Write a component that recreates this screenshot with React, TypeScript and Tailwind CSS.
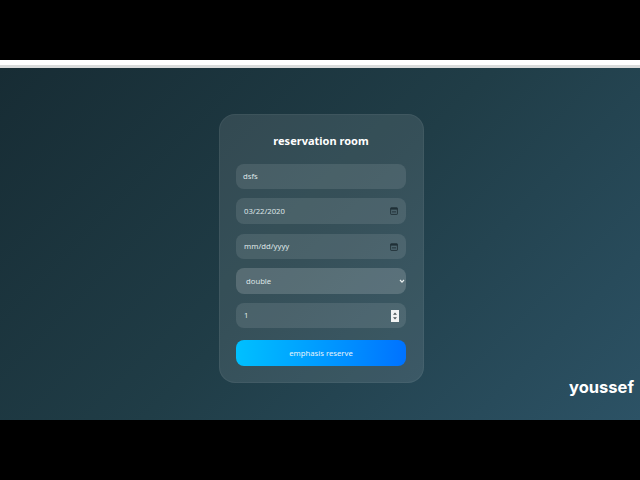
import React from "react";

const CalendarIcon: React.FC = () => (
  <svg width="8" height="8" viewBox="0 0 8 8" fill="none" className="text-[#1f2f36]">
    <rect x="0.6" y="0.8" width="6.8" height="6.6" rx="0.6" stroke="currentColor" strokeWidth="0.9" />
    <rect x="0.6" y="0.8" width="6.8" height="1.8" fill="currentColor" />
    <rect x="2" y="4" width="4" height="1.6" fill="currentColor" opacity="0.6" />
  </svg>
);

const Spinner: React.FC = () => (
  <svg width="8" height="12" viewBox="0 0 8 12">
    <rect width="8" height="12" fill="#f1f3f3" />
    <path d="M4 2.5 6 4.8H2Z" fill="#4a5558" />
    <path d="M4 9.5 6 7.2H2Z" fill="#4a5558" />
  </svg>
);

const Chevron: React.FC = () => (
  <svg width="6" height="6" viewBox="0 0 6 6" fill="none">
    <path d="M1 2 3 4.2 5 2" stroke="#e8eeee" strokeWidth="1.2" />
  </svg>
);

const field = "h-[25px] rounded-lg flex items-center justify-between bg-white/10 text-[7.7px] text-[#dfe6e7]";

const App: React.FC = () => {
  return (
    <div className="w-[640px] h-[480px] bg-black flex flex-col overflow-hidden font-['Noto_Sans','Open_Sans',sans-serif]">
      <div className="h-[60px] shrink-0" />
      <div className="h-[5px] shrink-0 bg-white" />
      <div className="h-[3px] shrink-0 bg-[#d9dbdb]" />
      <div className="relative h-[352px] shrink-0 pt-[46px] pl-[219px] bg-[linear-gradient(135deg,#172c34_0%,#203d47_50%,#2c5265_100%)]">
        <div className="w-[205px] h-[269px] rounded-2xl border border-white/5 bg-white/10 pl-4 pr-[17px] pt-[18px] flex flex-col">
          <h1 className="text-center text-[11px] leading-4 font-bold text-white mb-[15px]">reservation room</h1>
          <div className={`${field} mb-[9px] pl-[7px] pt-px`}>dsfs</div>
          <div className={`${field} mb-[10px] h-[26px] pl-2 pr-2`}>
            <span className="pt-px">03/22/2020</span>
            <CalendarIcon />
          </div>
          <div className={`${field} mb-[9px] pl-2 pr-2`}>
            <span className="pt-px">mm/dd/yyyy</span>
            <CalendarIcon />
          </div>
          <div className={`${field} mb-[9px] h-[26px] !bg-white/[.17] pl-[10px] pr-px`}>
            <span className="pt-[2px]">double</span>
            <Chevron />
          </div>
          <div className={`${field} mb-3 pl-[8px] pr-[7px]`}>
            <span className="pt-px">1</span>
            <Spinner />
          </div>
          <button className="h-[26px] shrink-0 rounded-lg bg-gradient-to-r from-[#00c0ff] to-[#0072ff] pt-px text-[7.7px] text-[#e6f4fb]">
            emphasis reserve
          </button>
        </div>
        <span className="absolute right-[6px] bottom-[23px] font-['Inter',sans-serif] text-[16.5px] leading-5 font-bold text-white">youssef</span>
      </div>
    </div>
  );
};

export default App;
